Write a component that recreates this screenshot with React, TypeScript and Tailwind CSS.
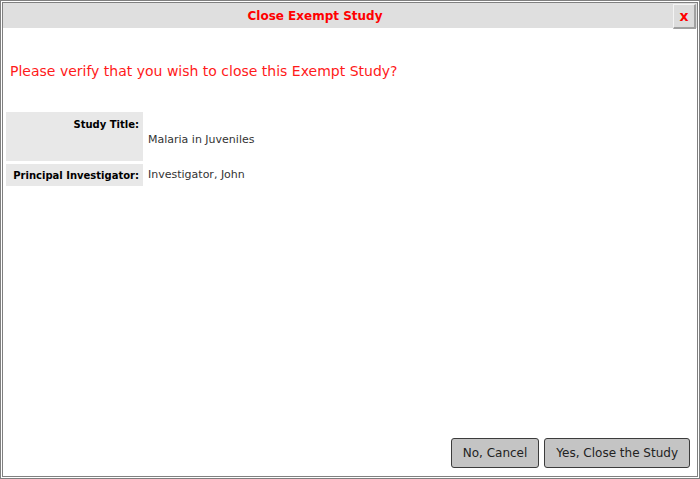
export default function App() {
  return (
    <div
      className="w-[700px] h-[479px] border-[3px] border-double border-[#808080] bg-white flex flex-col"
      style={{ fontFamily: '"DejaVu Sans", Verdana, sans-serif' }}
    >
      <div className="h-[25px] bg-[#dfdfdf] flex items-center">
        <div className="flex-1 text-center text-[12px] font-bold text-[#ff0000] pr-[46px]">
          Close Exempt Study
        </div>
        <button className="w-[23px] h-[25px] mr-[1px] mt-[1px] bg-[#dcdcdc] border border-t-[#f4f4f4] border-l-[#f4f4f4] border-r-[#a0a0a0] border-b-[#a0a0a0] border-r-2 border-b-2 text-[#ff0000] font-bold text-[14px] leading-none flex items-center justify-center">
          x
        </button>
      </div>

      <p className="mt-[33px] ml-[7px] text-[14px] text-[#ff1a1a]">
        Please verify that you wish to close this Exempt Study?
      </p>

      <div className="mt-[30px] mx-[3px] grid grid-cols-[137px_1fr] gap-x-[2px] gap-y-[3px] text-[11px]">
        <div className="h-[49px] bg-[#e8e8e8] text-right font-bold text-[10px] text-black pt-[5px] pr-[4px]">
          Study Title:
        </div>
        <div className="h-[49px] flex items-center pl-[3px] pt-[7px] text-[#333]">Malaria in Juveniles</div>
        <div className="h-[22px] bg-[#e8e8e8] whitespace-nowrap font-bold text-[10px] text-black flex items-center justify-end pr-[4px]">
          Principal Investigator:
        </div>
        <div className="h-[22px] flex items-center pl-[3px] text-[#333]">Investigator, John</div>
      </div>

      <div className="mt-auto mb-[8px] mr-[7px] flex justify-end gap-[5px]">
        <button className="h-[30px] px-[11px] bg-[#c4c4c4] border border-[#3c3c3c] rounded-[3px] text-[12px] text-[#222]">
          No, Cancel
        </button>
        <button className="h-[30px] px-[11px] bg-[#c4c4c4] border border-[#3c3c3c] rounded-[3px] text-[12px] text-[#222]">
          Yes, Close the Study
        </button>
      </div>
    </div>
  );
}
